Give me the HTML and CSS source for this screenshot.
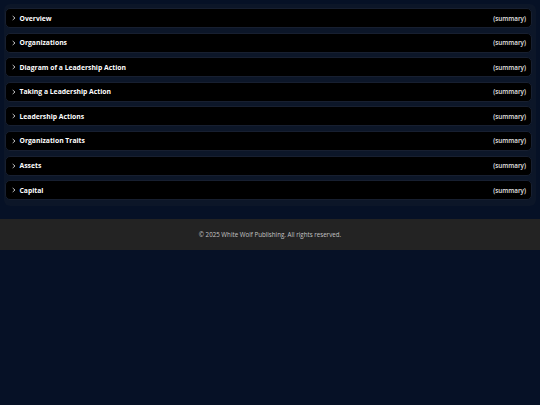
FILE: index.html
```html
<!DOCTYPE html>
<html lang="en">
<head>
<meta charset="utf-8">
<title>Organizations</title>
<link rel="stylesheet" href="styles.css">
</head>
<body>
<main class="content">
  <div class="accordion">
    <div class="item"><span class="chev"><svg viewBox="0 0 6 8" width="4" height="6"><path d="M1 1 L4.5 4 L1 7" fill="none" stroke="#fff" stroke-width="1.1"/></svg></span><span class="title">Overview</span><span class="summary">(summary)</span></div>
    <div class="item"><span class="chev"><svg viewBox="0 0 6 8" width="4" height="6"><path d="M1 1 L4.5 4 L1 7" fill="none" stroke="#fff" stroke-width="1.1"/></svg></span><span class="title">Organizations</span><span class="summary">(summary)</span></div>
    <div class="item"><span class="chev"><svg viewBox="0 0 6 8" width="4" height="6"><path d="M1 1 L4.5 4 L1 7" fill="none" stroke="#fff" stroke-width="1.1"/></svg></span><span class="title">Diagram of a Leadership Action</span><span class="summary">(summary)</span></div>
    <div class="item"><span class="chev"><svg viewBox="0 0 6 8" width="4" height="6"><path d="M1 1 L4.5 4 L1 7" fill="none" stroke="#fff" stroke-width="1.1"/></svg></span><span class="title">Taking a Leadership Action</span><span class="summary">(summary)</span></div>
    <div class="item"><span class="chev"><svg viewBox="0 0 6 8" width="4" height="6"><path d="M1 1 L4.5 4 L1 7" fill="none" stroke="#fff" stroke-width="1.1"/></svg></span><span class="title">Leadership Actions</span><span class="summary">(summary)</span></div>
    <div class="item"><span class="chev"><svg viewBox="0 0 6 8" width="4" height="6"><path d="M1 1 L4.5 4 L1 7" fill="none" stroke="#fff" stroke-width="1.1"/></svg></span><span class="title">Organization Traits</span><span class="summary">(summary)</span></div>
    <div class="item"><span class="chev"><svg viewBox="0 0 6 8" width="4" height="6"><path d="M1 1 L4.5 4 L1 7" fill="none" stroke="#fff" stroke-width="1.1"/></svg></span><span class="title">Assets</span><span class="summary">(summary)</span></div>
    <div class="item"><span class="chev"><svg viewBox="0 0 6 8" width="4" height="6"><path d="M1 1 L4.5 4 L1 7" fill="none" stroke="#fff" stroke-width="1.1"/></svg></span><span class="title">Capital</span><span class="summary">(summary)</span></div>
  </div>
</main>
<footer class="footer">© 2025 White Wolf Publishing. All rights reserved.</footer>
</body>
</html>
```
FILE: styles.css
```css
html, body {
  margin: 0;
  padding: 0;
}
body {
  background: #061126;
  font-family: "Open Sans", "Noto Sans", sans-serif;
  color: #fff;
  min-height: 405px;
}
.content {
  padding: 4px 4px 13px 4px;
}
.accordion {
  background: #0c1628;
  border-radius: 6px;
  padding: 4px 4px 6px 1px;
  display: flex;
  flex-direction: column;
  gap: 4.6px;
}
.item {
  height: 18px;
  background: #000;
  border: 1px solid #171f30;
  border-radius: 5px;
  display: flex;
  align-items: center;
  padding: 0 5px 0 6px;
}
.chev {
  display: flex;
  align-items: center;
  width: 7.5px;
}
.chev svg {
  display: block;
}
.title {
  font-weight: 700;
  font-size: 6.8px;
  flex: 1;
}
.summary {
  font-size: 6.3px;
  font-weight: 600;
  color: #e6e6e6;
}
.footer {
  background: #232323;
  height: 31px;
  display: flex;
  align-items: center;
  justify-content: center;
  font-size: 6.2px;
  color: #c4c4c4;
}
```
